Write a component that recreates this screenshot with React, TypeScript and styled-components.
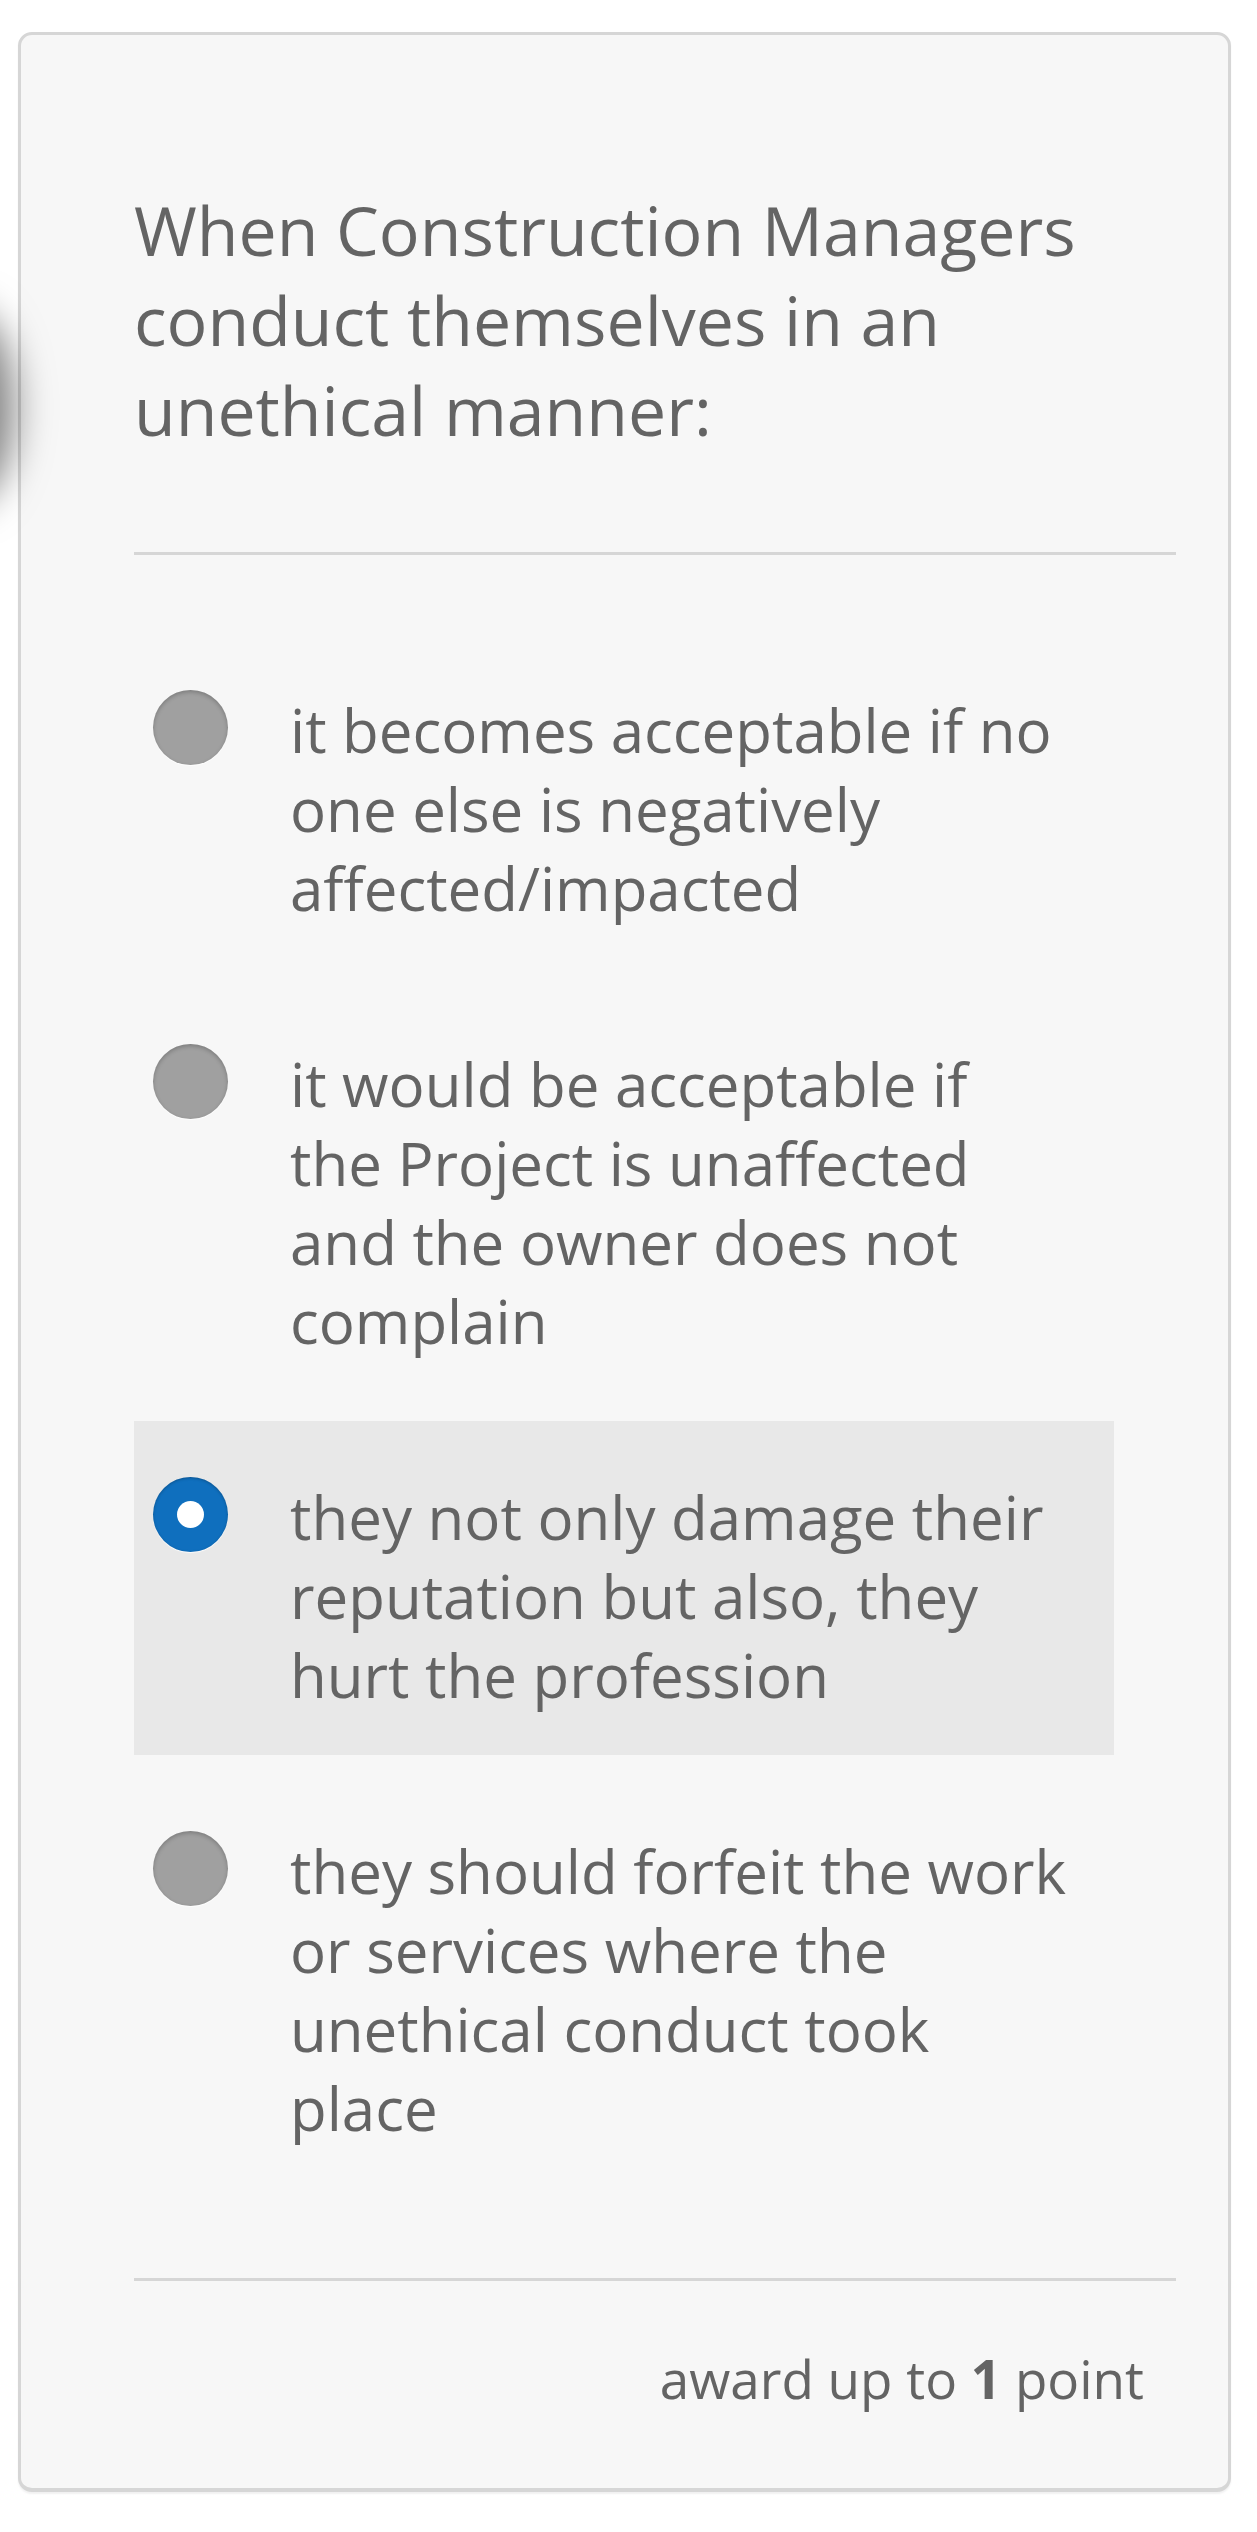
import React from "react";
import styled, { createGlobalStyle } from "styled-components";

const Global = createGlobalStyle`
  html, body { margin: 0; padding: 0; background: #ffffff; }
  body { font-family: "Open Sans", "Noto Sans", sans-serif; color: #646464; }
  * { box-sizing: border-box; }
`;

const Page = styled.div`
  position: relative;
  padding: 32px 26px 40px 18px;
  min-height: 2532px;
  overflow: hidden;
`;

const EdgeShadow = styled.div`
  position: absolute;
  left: -72px;
  top: 322px;
  width: 72px;
  height: 170px;
  border-radius: 50%;
  box-shadow: 0 0 38px 14px rgba(0, 0, 0, 0.5);
  pointer-events: none;
  z-index: 2;
`;

const Card = styled.div`
  background: #f7f7f7;
  border: 3px solid #d6d6d6;
  border-bottom-width: 4px;
  border-radius: 14px;
  box-shadow: 0 2px 2px rgba(0, 0, 0, 0.06);
  padding: 150px 52px 0 113px;
  height: 2460px;
  display: flex;
  flex-direction: column;
`;

const Title = styled.h1`
  margin: 0;
  font-size: 68px;
  line-height: 90px;
  font-weight: 400;
  color: #646464;
  padding-right: 20px;
`;

const Divider = styled.hr<{ $top: number }>`
  margin: ${(p) => p.$top}px 0 0 0;
  border: 0;
  height: 3px;
  background: #d6d6d6;
`;

const Options = styled.div`
  display: flex;
  flex-direction: column;
  gap: 20px;
  margin-top: 79px;
  width: 980px;
`;

const Option = styled.label<{ $selected?: boolean }>`
  display: flex;
  align-items: flex-start;
  gap: 62px;
  padding: 56px 41px 40px 19px;
  background: ${(p) => (p.$selected ? "#e8e8e8" : "transparent")};
  cursor: pointer;
`;

const Radio = styled.span<{ $selected?: boolean }>`
  flex: none;
  width: 75px;
  height: 75px;
  border-radius: 50%;
  position: relative;
  background: ${(p) => (p.$selected ? "#0f6fbe" : "#a0a0a0")};
  box-shadow: ${(p) =>
    p.$selected
      ? "inset 0 1px 3px rgba(0,0,0,0.25), 0 1px 1px rgba(255,255,255,0.9)"
      : "inset 0 2px 4px rgba(0,0,0,0.22), 0 1px 1px rgba(255,255,255,0.9)"};

  &::after {
    content: "";
    display: ${(p) => (p.$selected ? "block" : "none")};
    position: absolute;
    left: 50%;
    top: 50%;
    width: 27px;
    height: 27px;
    margin: -13.5px 0 0 -13.5px;
    border-radius: 50%;
    background: #ffffff;
  }
`;

const OptionText = styled.span`
  padding-top: 1px;
  font-size: 60px;
  line-height: 79px;
  color: #646464;
  flex: 1;
`;

const Footer = styled.div`
  display: flex;
  justify-content: flex-end;
  padding: 58px 32px 0 0;
  font-size: 53px;
  line-height: 79px;
  color: #646464;

  b {
    font-weight: 700;
  }
`;

const options = [
  "it becomes acceptable if no one else is negatively affected/impacted",
  "it would be acceptable if the Project is unaffected and the owner does not complain",
  "they not only damage their reputation but also, they hurt the profession",
  "they should forfeit the work or services where the unethical conduct took place",
];

export default function App() {
  const selected = 2;
  return (
    <Page>
      <Global />
      <EdgeShadow />
      <Card>
        <Title>When Construction Managers conduct themselves in an unethical manner:</Title>
        <Divider $top={97} />
        <Options>
          {options.map((text, i) => (
            <Option key={i} $selected={i === selected}>
              <Radio $selected={i === selected} />
              <OptionText>{text}</OptionText>
            </Option>
          ))}
        </Options>
        <Divider $top={90} />
        <Footer>
          <span>
            award up to <b>1</b> point
          </span>
        </Footer>
      </Card>
    </Page>
  );
}
